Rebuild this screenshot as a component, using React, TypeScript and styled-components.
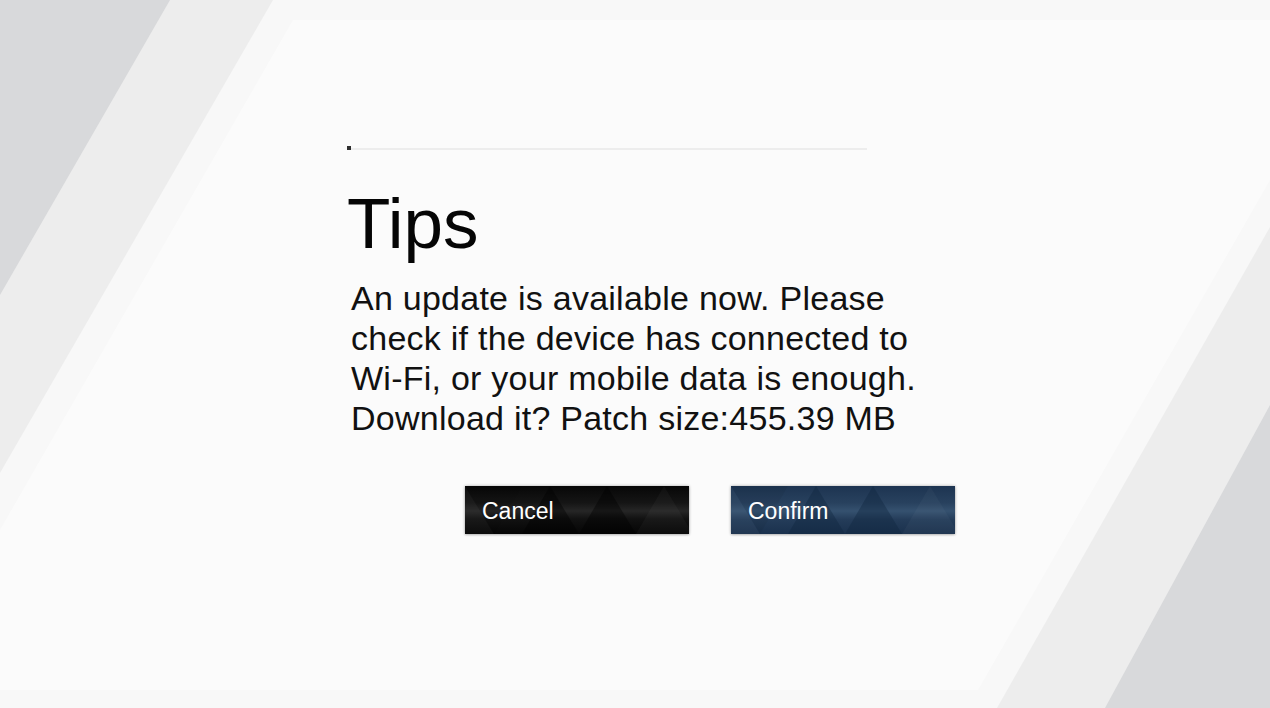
import React from "react";
import styled, { createGlobalStyle } from "styled-components";

const GlobalStyle = createGlobalStyle`
  html, body {
    margin: 0;
    padding: 0;
    background: #f8f8f8;
    font-family: "Liberation Sans", Arial, sans-serif;
  }
  * { box-sizing: border-box; }
`;

const Screen = styled.div`
  position: relative;
  width: 1270px;
  height: 708px;
  overflow: hidden;
  background: #f8f8f8;
`;

const Backdrop = styled.svg`
  position: absolute;
  inset: 0;
  width: 100%;
  height: 100%;
  z-index: 0;
`;

const Dialog = styled.main`
  position: relative;
  z-index: 1;
  display: flex;
  flex-direction: column;
  align-items: flex-start;
  padding: 146px 0 0 347px;
`;

const Divider = styled.div`
  display: flex;
  align-items: flex-end;
  height: 4px;
`;

const Dot = styled.span`
  width: 4px;
  height: 4px;
  background: #2e2e2e;
`;

const Rule = styled.span`
  width: 516px;
  height: 2px;
  background: #ededed;
`;

const Title = styled.h1`
  margin: 34px 0 0 0;
  font-family: "Liberation Sans", Arial, sans-serif;
  font-weight: 400;
  font-size: 71px;
  line-height: 80px;
  color: #050505;
`;

const Message = styled.p`
  margin: 14px 0 0 4px;
  font-family: "Liberation Sans", Arial, sans-serif;
  font-size: 34px;
  line-height: 40px;
  letter-spacing: 0.25px;
  color: #111;
  white-space: nowrap;
`;

const Actions = styled.div`
  display: flex;
  gap: 42px;
  margin: 48px 0 0 118px;
`;

const ActionButton = styled.button<{ $variant: "dark" | "blue" }>`
  position: relative;
  display: flex;
  align-items: center;
  width: 224px;
  height: 48px;
  padding: 3px 0 0 17px;
  border: none;
  overflow: hidden;
  cursor: pointer;
  box-shadow: 0 0 3px rgba(0, 0, 0, 0.3), 0 1px 2px rgba(0, 0, 0, 0.15);
  background: ${(p) =>
    p.$variant === "dark"
      ? "linear-gradient(180deg, #070707 0%, #151515 35%, #262626 52%, #121212 68%, #050505 100%)"
      : "linear-gradient(180deg, #1d3451 0%, #28415e 35%, #35516f 52%, #243c59 70%, #1a314d 100%)"};
  color: #fff;
  font-family: "Liberation Sans", Arial, sans-serif;
  font-size: 23px;
`;

const Pattern = styled.svg`
  position: absolute;
  inset: 0;
  width: 100%;
  height: 100%;
  pointer-events: none;
`;

const Label = styled.span`
  position: relative;
  z-index: 1;
`;

function TrianglePattern({ tint }: { tint: string }) {
  return (
    <Pattern viewBox="0 0 224 48" preserveAspectRatio="none">
      <polygon points="-28,48 0,0 29,48" fill="#fff" opacity="0.03" />
      <polygon points="0,0 29,48 57,0" fill="#000" opacity="0.05" />
      <polygon points="57,48 85,0 114,48" fill={tint} opacity="0.4" />
      <polygon points="114,48 142,0 171,48" fill={tint} opacity="0.4" />
      <polygon points="171,48 199,0 228,48" fill="#fff" opacity="0.03" />
    </Pattern>
  );
}

export default function App() {
  return (
    <>
      <GlobalStyle />
      <Screen>
        <Backdrop viewBox="0 0 1270 708" preserveAspectRatio="none">
          <polygon points="0,0 273,0 0,473" fill="#ededed" />
          <polygon points="0,0 170,0 0,295" fill="#d8d9db" />
          <polygon points="293,20 1270,20 1270,180 978,690 0,690 0,530" fill="#fbfbfb" />
          <polygon points="1270,227 1270,708 997,708" fill="#ededed" />
          <polygon points="1270,405 1270,708 1105,708" fill="#d8d9db" />
        </Backdrop>
        <Dialog>
          <Divider>
            <Dot />
            <Rule />
          </Divider>
          <Title>Tips</Title>
          <Message>
            An update is available now. Please
            <br />
            check if the device has connected to
            <br />
            Wi-Fi, or your mobile data is enough.
            <br />
            Download it? Patch size:455.39 MB
          </Message>
          <Actions>
            <ActionButton $variant="dark">
              <TrianglePattern tint="#000" />
              <Label>Cancel</Label>
            </ActionButton>
            <ActionButton $variant="blue">
              <TrianglePattern tint="#10263f" />
              <Label>Confirm</Label>
            </ActionButton>
          </Actions>
        </Dialog>
      </Screen>
    </>
  );
}
